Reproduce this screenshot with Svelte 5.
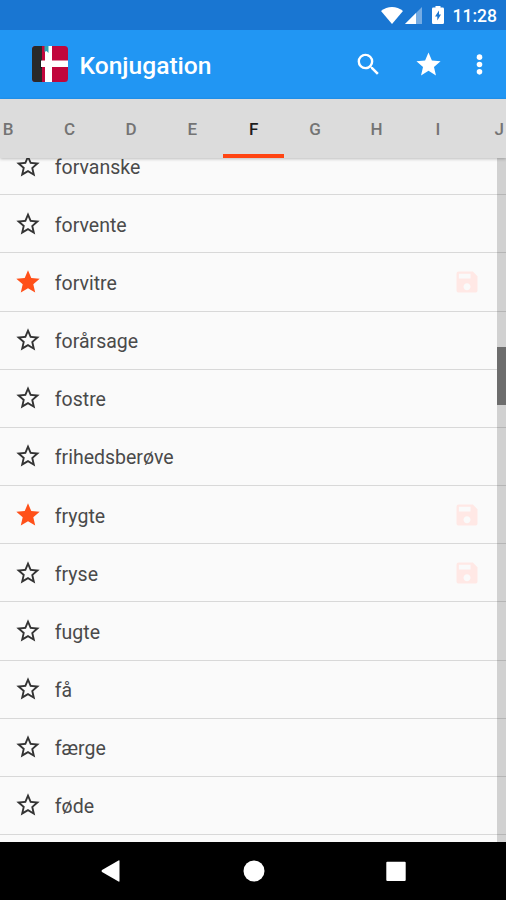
<script>
  let activeTab = 'F';
  let tabs = ['B', 'C', 'D', 'E', 'F', 'G', 'H', 'I', 'J'];

  let verbs = [
    { name: 'forvanske', starred: false, saved: false },
    { name: 'forvente', starred: false, saved: false },
    { name: 'forvitre', starred: true, saved: true },
    { name: 'forårsage', starred: false, saved: false },
    { name: 'fostre', starred: false, saved: false },
    { name: 'frihedsberøve', starred: false, saved: false },
    { name: 'frygte', starred: true, saved: true },
    { name: 'fryse', starred: false, saved: true },
    { name: 'fugte', starred: false, saved: false },
    { name: 'få', starred: false, saved: false },
    { name: 'færge', starred: false, saved: false },
    { name: 'føde', starred: false, saved: false },
  ];

  function toggleStar(verb) {
    verb.starred = !verb.starred;
    verbs = verbs;
  }
</script>

<main>
  <div class="status">
    <svg class="wifi" viewBox="0 0 22 17"><path d="M11 17L0 4Q5 0 11 0t11 4z" /></svg>
    <svg class="signal" viewBox="0 0 17 17">
      <path d="M0 17L17 0v17z" opacity="0.4" />
      <path d="M0 17L11 6v11z" />
    </svg>
    <svg class="battery" viewBox="0 0 12 18">
      <path fill-rule="evenodd" d="M3.5 0h5v1.6h2.2q1.3 0 1.3 1.3v13.8q0 1.3-1.3 1.3H1.3Q0 18 0 16.7V2.9q0-1.3 1.3-1.3h2.2zM7 4.500L3 10.500h2.300v4L9 8.500H7z" />
    </svg>
    <span>11:28</span>
  </div>

  <header>
    <svg class="logo" viewBox="0 0 36 36">
      <defs>
        <clipPath id="logo-shape"><rect width="36" height="36" rx="3.500" /></clipPath>
      </defs>
      <g clip-path="url(#logo-shape)">
        <rect width="36" height="36" fill="#c1063c" />
        <rect width="10" height="36" fill="#292929" />
        <path d="M10 14v8H8.500v-8z" fill="#111" />
        <path d="M13 0h7v36h-7z" fill="#fff" />
        <path d="M9 14.500h27v6.500H9z" fill="#fff" />
        <path d="M12.500 0h4v7l-2-2-2 1z" fill="#2aa5b5" />
      </g>
    </svg>
    <h1>Konjugation</h1>
    <svg class="icon search" viewBox="0 0 24 24">
      <path d="M15.500 14h-.79l-.28-.27A6.471 6.471 0 0 0 16 9.500 6.500 6.500 0 1 0 9.500 16c1.610 0 3.090-.59 4.230-1.570l.27.280v.79l5 4.990L20.490 19l-4.990-5zm-6 0C7.010 14 5 11.990 5 9.500S7.010 5 9.500 5 14 7.010 14 9.500 11.990 14 9.500 14z" />
    </svg>
    <svg class="icon favorites" viewBox="0 0 24 24">
      <path d="M12 17.270L18.180 21l-1.640-7.030L22 9.240l-7.190-.61L12 2 9.190 8.630 2 9.240l5.460 4.730L5.820 21z" />
    </svg>
    <svg class="icon more" viewBox="0 0 24 24">
      <circle cx="12" cy="5.900" r="2.300" />
      <circle cx="12" cy="12" r="2.300" />
      <circle cx="12" cy="18.100" r="2.300" />
    </svg>
  </header>

  <nav class="tabs">
    {#each tabs as tab}
      <button class="tab" class:active={tab === activeTab} on:click={() => (activeTab = tab)}>{tab}</button>
    {/each}
  </nav>

  <div class="content">
    <ul>
      {#each verbs as verb (verb.name)}
        <li>
          <button class="star" class:starred={verb.starred} aria-label="Favorit" on:click={() => toggleStar(verb)}>
            <svg viewBox="0 0 24 24">
              {#if verb.starred}
                <path d="M12 17.270L18.180 21l-1.640-7.030L22 9.240l-7.190-.61L12 2 9.190 8.630 2 9.240l5.460 4.730L5.820 21z" />
              {:else}
                <path d="M22 9.240l-7.190-.62L12 2 9.190 8.630 2 9.240l5.460 4.730L5.820 21 12 17.270 18.180 21l-1.630-7.030L22 9.240zM12 15.400l-3.760 2.270 1-4.280-3.320-2.880 4.380-.38L12 6.100l1.710 4.040 4.380.38-3.320 2.880 1 4.280L12 15.400z" />
              {/if}
            </svg>
          </button>
          <span>{verb.name}</span>
          {#if verb.saved}
            <svg class="save" viewBox="0 0 24 24">
              <path d="M17 3H5a2 2 0 0 0-2 2v14c0 1.100.89 2 2 2h14c1.100 0 2-.9 2-2V7l-4-4zm-5 16c-1.660 0-3-1.340-3-3s1.340-3 3-3 3 1.340 3 3-1.340 3-3 3zm3-10H5V5h10v4z" />
            </svg>
          {/if}
        </li>
      {/each}
    </ul>
    <div class="scrollbar"><div class="thumb"></div></div>
  </div>

  <footer>
    <svg viewBox="0 0 24 24"><path d="M20.500 2v20q0 1-1 .5L3 13q-1-1 0-2l16.500-9.500q1-.5 1 .5z" /></svg>
    <svg viewBox="0 0 24 24"><circle cx="12" cy="12" r="10.500" /></svg>
    <svg viewBox="0 0 24 24"><rect x="2.300" y="2.700" width="19.400" height="19.400" rx="1" /></svg>
  </footer>
</main>

<style>
  :global(body) {
    margin: 0;
  }

  main {
    display: flex;
    flex-direction: column;
    width: 506px;
    height: 900px;
    overflow: hidden;
    background-color: #fafafa;
    font-family: Roboto, sans-serif;
  }

  svg {
    display: block;
    flex: none;
    fill: currentColor;
  }

  button {
    border: none;
    padding: 0;
    background: none;
    font-family: inherit;
    cursor: pointer;
  }

  .status {
    display: flex;
    flex: none;
    align-items: center;
    justify-content: flex-end;
    box-sizing: border-box;
    height: 30px;
    padding-right: 9px;
    background-color: #1976d2;
    color: white;
    font-size: 17.500px;
    font-weight: 500;
  }

  .status span {
    line-height: 30px;
    margin-top: 2px;
  }

  .wifi {
    width: 22px;
    height: 17px;
    margin-right: 2px;
  }

  .signal {
    width: 17px;
    height: 17px;
    margin-right: 10px;
  }

  .battery {
    width: 12px;
    height: 18px;
    margin-right: 9px;
  }

  header {
    display: flex;
    flex: none;
    align-items: center;
    box-sizing: border-box;
    height: 69px;
    padding: 0 12px 0 32px;
    background-color: #2196f3;
    color: white;
  }

  .logo {
    width: 36px;
    height: 36px;
    margin: -1px 11.500px 0 0;
  }

  h1 {
    flex: 1;
    margin: 2px 0 0;
    font-size: 24.600px;
    font-weight: 500;
  }

  .icon {
    width: 29px;
    height: 29px;
  }

  .search {
    margin-right: 30.500px;
  }

  .favorites {
    margin-right: 22.500px;
  }

  .tabs {
    position: relative;
    z-index: 1;
    display: flex;
    flex: none;
    justify-content: center;
    box-sizing: border-box;
    height: 59px;
    padding-left: 1.500px;
    background-color: #dcdcdc;
    box-shadow: 0 1px 3px rgba(0, 0, 0, 0.25);
  }

  .tab {
    flex: none;
    box-sizing: border-box;
    width: 61.400px;
    padding-top: 4px;
    border-bottom: 4px solid transparent;
    color: #747474;
    font-size: 17px;
    font-weight: 500;
  }

  .tab.active {
    border-bottom-color: #ff4513;
    color: #1c1c1c;
  }

  .content {
    position: relative;
    flex: 1;
    min-height: 0;
    overflow: hidden;
  }

  ul {
    margin: -21px 0 0;
    padding: 0;
    list-style: none;
  }

  li {
    display: flex;
    align-items: center;
    box-sizing: border-box;
    height: 58.180px;
    padding: 0 25px 0 13.500px;
    border-bottom: 1px solid #d8d8d8;
    color: #4a4a4a;
    font-size: 19.500px;
  }

  li span {
    flex: 1;
    padding-top: 3px;
  }

  .star {
    margin-right: 13.300px;
    color: #333;
  }

  .star.starred {
    color: #ff5019;
  }

  .star svg {
    width: 28px;
    height: 28px;
  }

  .save {
    width: 28px;
    height: 28px;
    color: #ffe8e5;
  }

  /* drawn over the rows, the dividers show through the track */
  .scrollbar {
    position: absolute;
    top: 0;
    right: 0;
    bottom: 0;
    width: 9px;
    background-color: rgba(0, 0, 0, 0.16);
  }

  .thumb {
    height: 58px;
    margin-top: 189px;
    background-color: #6d6d6d;
  }

  footer {
    display: flex;
    flex: none;
    align-items: center;
    justify-content: center;
    gap: 118.500px;
    box-sizing: border-box;
    height: 58px;
    padding-left: 1px;
    background-color: black;
    color: white;
  }

  footer svg {
    width: 24px;
    height: 24px;
  }
</style>
